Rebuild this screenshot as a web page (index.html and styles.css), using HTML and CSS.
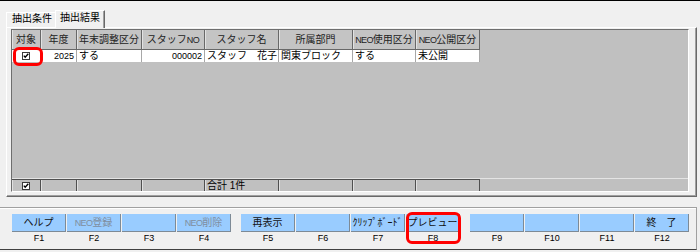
FILE: index.html
```html
<!DOCTYPE html>
<html lang="ja">
<head>
<meta charset="utf-8">
<title>抽出結果</title>
<link rel="stylesheet" href="styles.css">
</head>
<body>
<div class="window">
  <div class="tabs">
    <div class="tab">抽出条件</div>
    <div class="tab active">抽出結果</div>
  </div>
  <div class="panel">
    <div class="grid">
      <div class="row head">
        <div class="c w1">対象</div>
        <div class="c w2">年度</div>
        <div class="c w3">年末調整区分</div>
        <div class="c w4">スタッフ<span class="lat">NO</span></div>
        <div class="c w5">スタッフ名</div>
        <div class="c w6">所属部門</div>
        <div class="c w7"><span class="lat">NEO</span>使用区分</div>
        <div class="c w8"><span class="lat">NEO</span>公開区分</div>
      </div>
      <div class="row data">
        <div class="c w1 mid"><svg class="chk" width="8" height="8" viewBox="0 0 8 8"><rect x="0.5" y="0.5" width="7" height="7" fill="#fff" stroke="#3a3a3a"/><path d="M1.8 3.6 L3.2 5.2 L6.3 1.8" fill="none" stroke="#000" stroke-width="1.4"/></svg></div>
        <div class="c w2 num">2025</div>
        <div class="c w3">する</div>
        <div class="c w4 num">000002</div>
        <div class="c w5">スタッフ　花子</div>
        <div class="c w6">関東ブロック</div>
        <div class="c w7">する</div>
        <div class="c w8">未公開</div>
      </div>
      <div class="spacer"></div>
      <div class="row foot">
        <div class="c w1 mid"><svg class="chk" width="8" height="8" viewBox="0 0 8 8"><rect x="0.5" y="0.5" width="7" height="7" fill="#fff" stroke="#3a3a3a"/><path d="M1.8 3.6 L3.2 5.2 L6.3 1.8" fill="none" stroke="#000" stroke-width="1.4"/></svg></div>
        <div class="c w2"></div>
        <div class="c w3"></div>
        <div class="c w4"></div>
        <div class="c w5">合計 1件</div>
        <div class="c w6"></div>
        <div class="c w7"></div>
        <div class="c w8"></div>
      </div>
    </div>
  </div>
  <div class="fbar">
    <div class="group">
      <div class="fkey"><div class="btn">ヘルプ</div><div class="lbl">F1</div></div>
      <div class="fkey"><div class="btn off"><span class="lat">NEO</span>登録</div><div class="lbl">F2</div></div>
      <div class="fkey"><div class="btn"></div><div class="lbl">F3</div></div>
      <div class="fkey"><div class="btn off"><span class="lat">NEO</span>削除</div><div class="lbl">F4</div></div>
    </div>
    <div class="group">
      <div class="fkey"><div class="btn">再表示</div><div class="lbl">F5</div></div>
      <div class="fkey"><div class="btn"></div><div class="lbl">F6</div></div>
      <div class="fkey"><div class="btn">ｸﾘｯﾌﾟﾎﾞｰﾄﾞ</div><div class="lbl">F7</div></div>
      <div class="fkey"><div class="btn">プレビュー</div><div class="lbl">F8</div></div>
    </div>
    <div class="group">
      <div class="fkey"><div class="btn"></div><div class="lbl">F9</div></div>
      <div class="fkey"><div class="btn"></div><div class="lbl">F10</div></div>
      <div class="fkey"><div class="btn"></div><div class="lbl">F11</div></div>
      <div class="fkey"><div class="btn">終　了</div><div class="lbl">F12</div></div>
    </div>
  </div>
  <div class="mark mark1"></div>
  <div class="mark mark2"></div>
</div>
</body>
</html>
```

FILE: styles.css
```css
* { box-sizing: border-box; }
body {
  margin: 0;
  background: #f0f0f0;
  font-family: "Liberation Sans", "Noto Sans CJK JP", sans-serif;
  font-size: 10px;
  color: #000;
}
.window {
  position: relative;
  width: 700px;
  height: 252px;
  border-top: 1px solid #000;
  overflow: hidden;
}
.tabs {
  display: flex;
  align-items: flex-end;
  height: 26px;
  padding-left: 6px;
}
.tab {
  width: 49px;
  height: 15px;
  border-left: 1px solid #fff;
  border-top: 1px solid #fff;
  padding-left: 5px;
  line-height: 12px;
  white-space: nowrap;
}
.tab.active {
  position: relative;
  z-index: 1;
  width: 50px;
  height: 18px;
  margin-bottom: -1px;
  padding-left: 4px;
  line-height: 13px;
  background: #f0f0f0;
  border-right: 1px solid #696969;
  box-shadow: inset -1px 0 #a0a0a0;
}
.panel {
  margin-left: 6px;
  width: 691px;
  height: 170px;
  border: 1px solid;
  border-color: #fff #696969 #696969 #fff;
  box-shadow: inset -1px -1px #a0a0a0;
  padding: 1px 7px 4px 4px;
}
.grid {
  height: 163px;
  border: 1px solid;
  border-color: #6e6e6e #fff #fff #6e6e6e;
  background: #c0c0c0;
  display: flex;
  flex-direction: column;
}
.row { display: flex; flex: none; }
.c {
  flex: none;
  overflow: hidden;
  white-space: nowrap;
}
.lat {
  font-size: 9px;
  letter-spacing: -0.6px;
}
.w1 { width: 29px; }
.w2 { width: 36px; }
.w3 { width: 65px; }
.w4 { width: 63px; }
.w5 { width: 74px; }
.w6 { width: 74px; }
.w7 { width: 63px; }
.w8 { width: 64px; }
.head { height: 20px; }
.head .c {
  height: 20px;
  background: #c4c4c4;
  border-right: 1px solid #686868;
  border-bottom: 1px solid #686868;
  box-shadow: inset 1px 0 #e2e2e2;
  text-align: center;
  line-height: 19px;
  color: #222;
}
.data { height: 12px; }
.data .c {
  height: 12px;
  background: #fff;
  border-right: 1px solid #a8a8a8;
  line-height: 12px;
  padding-left: 2px;
}
.data .num {
  text-align: right;
  padding-right: 2px;
  font-size: 9px;
}
.mid {
  display: flex;
  align-items: center;
  justify-content: center;
}
.data .mid { padding-left: 0; }
.chk { display: block; }
.spacer { flex: 1; }
.foot {
  height: 12px;
  box-shadow: 0 -1px #e4e4e4;
}
.foot .c {
  height: 12px;
  background: #c0c0c0;
  border-top: 1px solid #505050;
  border-right: 1px solid #505050;
  box-shadow: inset 1px 0 #e0e0e0;
  line-height: 11px;
  padding-left: 2px;
}
.foot .mid { padding-left: 0; }
.fbar {
  margin-top: 10px;
  margin-right: 3px;
  height: 43px;
  border-top: 1px solid #a0a0a0;
  border-right: 1px solid #a0a0a0;
  border-bottom: 1px solid #404040;
  box-shadow: inset 0 1px #fff;
  padding: 6px 0 0 12px;
  display: flex;
  gap: 10px;
}
.group { display: flex; gap: 1px; }
.fkey {
  width: 54px;
  display: flex;
  flex-direction: column;
}
.btn {
  height: 18px;
  background: #99ccff;
  border-right: 1px solid #7d8a96;
  border-bottom: 1px solid #7d8a96;
  text-align: center;
  line-height: 17px;
  white-space: nowrap;
  overflow: hidden;
  color: #111;
}
.btn.off { color: #7f8ea0; }
.lbl {
  height: 16px;
  text-align: center;
  font-size: 9px;
  line-height: 13px;
  color: #000;
}
.mark {
  position: absolute;
  border: 3px solid #f00;
  border-radius: 6px;
}
.mark1 { left: 13px; top: 46px; width: 30px; height: 19px; }
.mark2 { left: 406px; top: 211px; width: 55px; height: 32px; }
```
